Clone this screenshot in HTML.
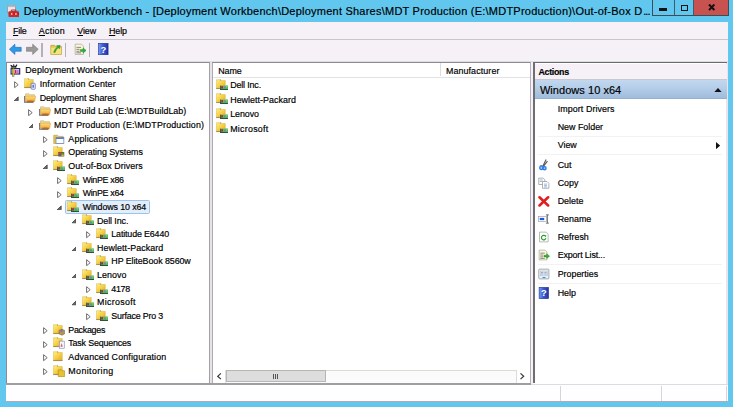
<!DOCTYPE html>
<html><head><meta charset="utf-8"><title>DeploymentWorkbench</title><style>
html,body{margin:0;padding:0}
body{width:733px;height:407px;overflow:hidden;background:#61c7ee;position:relative;font-family:"Liberation Sans", sans-serif;}
.t{position:absolute;white-space:nowrap;line-height:14px;height:14px;color:#000;-webkit-text-stroke:0.18px #000}
.ic{position:absolute;display:block}
.abs{position:absolute}
.sel{position:absolute;box-sizing:border-box;border:1px solid #9cc2ee;background:#e3eefb;border-radius:1.5px}
u{text-decoration:underline;text-decoration-thickness:0.8px;text-underline-offset:1px}
</style></head>
<body>

<svg width="0" height="0" style="position:absolute"><defs>
<linearGradient id="fg" x1="0" y1="0" x2="1" y2="1"><stop offset="0" stop-color="#fdee94"/><stop offset="0.45" stop-color="#f7d548"/><stop offset="1" stop-color="#e9a92c"/></linearGradient>
<linearGradient id="fo" x1="0" y1="0" x2="0" y2="1"><stop offset="0" stop-color="#fde07a"/><stop offset="1" stop-color="#f0a83c"/></linearGradient>
<linearGradient id="hb" x1="0" y1="0" x2="1" y2="0"><stop offset="0" stop-color="#7a9cf4"/><stop offset="0.45" stop-color="#3a5cd4"/><stop offset="1" stop-color="#2034a0"/></linearGradient>
</defs></svg>
<div class="abs" style="left:5.6px;top:22.4px;width:722px;height:378.6px;background:#f5f1f7"></div>
<!-- caption buttons -->
<div class="abs" style="left:652.4px;top:0;width:76.4px;height:15.7px;background:#61c7ee;border:1px solid #3c4c58;border-top:none;box-sizing:border-box"></div>
<div class="abs" style="left:694px;top:0;width:34.1px;height:15.1px;background:#c8524f"></div>
<div class="abs" style="left:673.6px;top:0;width:1px;height:15px;background:#3c5c70"></div>
<div class="abs" style="left:693.3px;top:0;width:1px;height:15px;background:#3c5c70"></div>
<div class="abs" style="left:659.4px;top:8.1px;width:7.5px;height:2.7px;background:#111"></div>
<div class="abs" style="left:680.6px;top:4.6px;width:7.6px;height:6.1px;border:1.5px solid #111;border-top-width:1.9px;box-sizing:border-box"></div>
<svg class="ic" style="left:708px;top:4.3px" width="7.4" height="6.6" viewBox="0 0 7.4 6.6"><path d="M1 0.5L6.4 6.1M6.4 0.5L1 6.1" stroke="#111" stroke-width="2"/></svg>
<!-- menu/toolbar separators -->
<div class="abs" style="left:5.6px;top:39.1px;width:722px;height:1px;background:#c9c5cd"></div>
<div class="abs" style="left:5.6px;top:61.4px;width:722px;height:1px;background:#e0dce4"></div>
<!-- tree pane -->
<div class="abs" style="left:5.6px;top:62.2px;width:204.2px;height:321.4px;background:#fff;border:1px solid #8e8a94;border-right-color:#a4a0a8;border-bottom:none;box-sizing:border-box"></div>
<div class="abs" style="left:209.8px;top:62.2px;width:2.2px;height:321.4px;background:#e6e2e8"></div>
<!-- list pane -->
<div class="abs" style="left:211.9px;top:62.2px;width:319.2px;height:321.4px;background:#fff;border:1px solid #8e8a94;border-left-color:#aeaab2;border-right-color:#b4b0bc;border-bottom:none;box-sizing:border-box"></div>
<div class="abs" style="left:212.9px;top:76.7px;width:317.2px;height:1px;background:#e2e2e6"></div>
<div class="abs" style="left:440.2px;top:63.2px;width:1px;height:13px;background:#dcdce0"></div>
<!-- hscroll -->
<div class="abs" style="left:212.9px;top:370px;width:317.2px;height:13px;background:#fbfbfb"></div>
<div class="abs" style="left:212.9px;top:369.6px;width:317.2px;height:1px;background:#dadada"></div>
<div class="abs" style="left:226.2px;top:370.4px;width:99.8px;height:12px;background:#dddddd;box-sizing:border-box;border:1px solid #b6b6b6"></div>
<!-- actions pane -->
<div class="abs" style="left:533.2px;top:62.2px;width:194.4px;height:321.4px;background:#fff"></div>
<div class="abs" style="left:726.4px;top:62.2px;width:1.2px;height:321.4px;background:#e8e6ea"></div>
<div class="abs" style="left:533.3px;top:62.2px;width:1.4px;height:320.6px;background:#6e6e6e"></div>
<div class="abs" style="left:533.2px;top:62.1px;width:194px;height:1.35px;background:#6a6a6a"></div>
<div class="abs" style="left:534.8px;top:63.5px;width:191.9px;height:15.6px;background:#f5f1f7"></div>
<div class="abs" style="left:534.8px;top:79px;width:191.9px;height:1px;background:#c8c8d0"></div>
<div class="abs" style="left:534.8px;top:80.2px;width:191.9px;height:18.2px;background:linear-gradient(#c3d8ef,#b4cde9 45%,#9fbcdc)"></div>
<div class="abs" style="left:534.8px;top:98.2px;width:191.9px;height:1px;background:#93b0d2"></div>
<svg class="ic" style="left:713.8px;top:87.8px" width="8" height="4.4" viewBox="0 0 8 4.4"><path d="M0 4.4L4 0L8 4.4z" fill="#111"/></svg>
<svg class="ic" style="left:716px;top:141.8px" width="4.2" height="7.2" viewBox="0 0 4.2 7.2"><path d="M0 0L4.2 3.6L0 7.2z" fill="#111"/></svg>
<!-- status bar -->
<div class="abs" style="left:5.6px;top:383.1px;width:525.4px;height:1.5px;background:#a09ca4"></div>
<div class="abs" style="left:531px;top:383.6px;width:196.6px;height:1px;background:#dcdce0"></div>
<div class="abs" style="left:5.6px;top:384.7px;width:722px;height:16.1px;background:#fefdff"></div>
<div class="abs" style="left:5.6px;top:400.6px;width:722px;height:0.8px;background:#b0acb4"></div>
<div class="abs" style="left:559.9px;top:385.5px;width:1px;height:15px;background:#d8d4dc"></div>
<div class="abs" style="left:661.2px;top:385.5px;width:1px;height:15px;background:#d8d4dc"></div>
<div class="abs" style="left:726.2px;top:385.5px;width:1px;height:15px;background:#d8d4dc"></div>
<div class="abs" style="left:538px;top:135.8px;width:184px;height:1px;background:#f2f2f6"></div>
<div class="abs" style="left:538px;top:154.4px;width:184px;height:1px;background:#f2f2f6"></div>
<div class="abs" style="left:538px;top:264.3px;width:184px;height:1px;background:#f2f2f6"></div>
<div class="abs" style="left:538px;top:282.9px;width:184px;height:1px;background:#f2f2f6"></div>
<div class="abs" style="left:516.4px;top:370.4px;width:1px;height:12.6px;background:#dcdcdc"></div><div class="abs" style="left:517.4px;top:370.4px;width:12.6px;height:12.6px;background:#fff"></div><div class="abs" style="left:225.4px;top:370.4px;width:1px;height:12.6px;background:#dcdcdc"></div><div class="abs" style="left:212.9px;top:370.4px;width:12.5px;height:12.6px;background:#fff"></div>
<svg class="ic" style="left:217.3px;top:373.1px" width="4.4" height="6.6" viewBox="0 0 4.4 6.6"><path d="M3.9 0.4L0.7 3.3L3.9 6.2" fill="none" stroke="#333" stroke-width="1.15"/></svg>
<svg class="ic" style="left:520.2px;top:373.1px" width="4.4" height="6.6" viewBox="0 0 4.4 6.6"><path d="M0.5 0.4L3.7 3.3L0.5 6.2" fill="none" stroke="#333" stroke-width="1.15"/></svg>
<div class="abs" style="left:273.0px;top:373.7px;width:1.1px;height:5px;background:#555"></div><div class="abs" style="left:275.1px;top:373.7px;width:1.1px;height:5px;background:#555"></div><div class="abs" style="left:277.2px;top:373.7px;width:1.1px;height:5px;background:#555"></div>
<svg class="ic" style="left:10.20px;top:64.10px" width="11" height="13" viewBox="0 0 11 13"><path d="M0.6 1.1l2.4 1.7M3.6 0.4l0.5 2.4M7 0.7L5.2 3.1" stroke="#111" stroke-width="1.1" fill="none"/><path d="M0.8 3h5.6" stroke="#111" stroke-width="1.2"/><rect x="1.1" y="4.6" width="8.6" height="5.4" fill="#fff" stroke="#1a2060" stroke-width="1.1"/><rect x="2.5" y="4.3" width="1.5" height="8.2" fill="#f0e020" stroke="#333" stroke-width="0.4"/><rect x="4.7" y="5.8" width="1.8" height="3.2" fill="#e02020"/><rect x="6.7" y="5.8" width="2.1" height="3.2" fill="#d870d8"/></svg>
<svg class="ic" style="left:24.24px;top:78.04px" width="12" height="12" viewBox="0 0 16 16"><path d="M0.5 0.9h5.4l0.8 1.1H12.4v10.4H0.5z" fill="url(#fg)" stroke="#d6ae3c" stroke-width="0.6"/><path d="M0.2 12.5h12.5v0.9H0.2z" fill="#7a6428"/><path d="M6.1 0.4v1.8" stroke="#8a6a20" stroke-width="0.7"/><rect x="9.5" y="7" width="5.5" height="8" rx="1" fill="#e8eefc" stroke="#4a62b8" stroke-width="0.9"/><rect x="11.4" y="9" width="1.6" height="4" fill="#3a52c8"/></svg>
<svg class="ic" style="left:14.14px;top:81.34px" width="5" height="7.4" viewBox="0 0 5 7.4"><path d="M0.6 0.7L4.2 3.7L0.6 6.7z" fill="#fff" stroke="#666" stroke-width="0.95"/></svg>
<svg class="ic" style="left:24.24px;top:91.69px" width="12" height="12" viewBox="0 0 16 16"><path d="M2 2.4h4.6l1 1.2H14v4H2z" fill="#ecd89a" stroke="#c8a860" stroke-width="0.7"/><path d="M0.9 5.6h14.6l-1.2 6.8H2z" fill="url(#fo)" stroke="#d09a38" stroke-width="0.6"/><path d="M3.5 12.2c2-1.4 7-1.4 10.5-0.2l-1 1.6H4.5z" fill="#e07a20"/><path d="M0.8 5.4v8.6" stroke="#283058" stroke-width="0.9"/><path d="M0.6 13.6h12" stroke="#383838" stroke-width="1.1"/></svg>
<svg class="ic" style="left:13.24px;top:95.69px" width="5.8" height="5.4" viewBox="0 0 5.8 5.4"><path d="M5.2 0.9V4.8H1.1z" fill="#6a6a6a" stroke="#3a3a3a" stroke-width="0.75"/></svg>
<svg class="ic" style="left:38.58px;top:105.33px" width="12" height="12" viewBox="0 0 16 16"><path d="M2 2.4h4.6l1 1.2H14v4H2z" fill="#ecd89a" stroke="#c8a860" stroke-width="0.7"/><path d="M0.9 5.6h14.6l-1.2 6.8H2z" fill="url(#fo)" stroke="#d09a38" stroke-width="0.6"/><path d="M3.5 12.2c2-1.4 7-1.4 10.5-0.2l-1 1.6H4.5z" fill="#e07a20"/><path d="M0.8 5.4v8.6" stroke="#283058" stroke-width="0.9"/><path d="M0.6 13.6h12" stroke="#383838" stroke-width="1.1"/></svg>
<svg class="ic" style="left:28.48px;top:108.64px" width="5" height="7.4" viewBox="0 0 5 7.4"><path d="M0.6 0.7L4.2 3.7L0.6 6.7z" fill="#fff" stroke="#666" stroke-width="0.95"/></svg>
<svg class="ic" style="left:38.58px;top:118.98px" width="12" height="12" viewBox="0 0 16 16"><path d="M2 2.4h4.6l1 1.2H14v4H2z" fill="#ecd89a" stroke="#c8a860" stroke-width="0.7"/><path d="M0.9 5.6h14.6l-1.2 6.8H2z" fill="url(#fo)" stroke="#d09a38" stroke-width="0.6"/><path d="M3.5 12.2c2-1.4 7-1.4 10.5-0.2l-1 1.6H4.5z" fill="#e07a20"/><path d="M0.8 5.4v8.6" stroke="#283058" stroke-width="0.9"/><path d="M0.6 13.6h12" stroke="#383838" stroke-width="1.1"/></svg>
<svg class="ic" style="left:27.58px;top:122.98px" width="5.8" height="5.4" viewBox="0 0 5.8 5.4"><path d="M5.2 0.9V4.8H1.1z" fill="#6a6a6a" stroke="#3a3a3a" stroke-width="0.75"/></svg>
<svg class="ic" style="left:52.92px;top:132.62px" width="12" height="12" viewBox="0 0 16 16"><path d="M1 3h5l1.2 1.5H13.5v9.5H1z" fill="#e8c84a" stroke="#b89830" stroke-width="0.8"/><rect x="4" y="6" width="10.5" height="8" fill="#fff" stroke="#5a78b8" stroke-width="0.9"/><rect x="4" y="6" width="10.5" height="2" fill="#5a78d8"/></svg>
<svg class="ic" style="left:42.82px;top:135.92px" width="5" height="7.4" viewBox="0 0 5 7.4"><path d="M0.6 0.7L4.2 3.7L0.6 6.7z" fill="#fff" stroke="#666" stroke-width="0.95"/></svg>
<svg class="ic" style="left:52.92px;top:146.27px" width="12" height="12" viewBox="0 0 16 16"><path d="M0.5 0.9h5.4l0.8 1.1H12.4v10.4H0.5z" fill="url(#fg)" stroke="#d6ae3c" stroke-width="0.6"/><path d="M0.2 12.5h12.5v0.9H0.2z" fill="#7a6428"/><path d="M6.1 0.4v1.8" stroke="#8a6a20" stroke-width="0.7"/><rect x="7" y="8" width="8" height="6" fill="#7a5a28"/><rect x="8" y="9" width="3" height="2" fill="#d04040"/><rect x="11.3" y="9" width="3" height="2" fill="#40a040"/><rect x="8" y="11.4" width="3" height="2" fill="#4060d0"/><rect x="11.3" y="11.4" width="3" height="2" fill="#e0c030"/></svg>
<svg class="ic" style="left:42.82px;top:149.57px" width="5" height="7.4" viewBox="0 0 5 7.4"><path d="M0.6 0.7L4.2 3.7L0.6 6.7z" fill="#fff" stroke="#666" stroke-width="0.95"/></svg>
<svg class="ic" style="left:52.92px;top:159.91px" width="12" height="12" viewBox="0 0 16 16"><path d="M0.5 0.9h5.4l0.8 1.1H12.4v10.4H0.5z" fill="url(#fg)" stroke="#d6ae3c" stroke-width="0.6"/><path d="M0.2 12.5h12.5v0.9H0.2z" fill="#7a6428"/><path d="M6.1 0.4v1.8" stroke="#8a6a20" stroke-width="0.7"/><rect x="6.4" y="9" width="9.4" height="5" fill="#3c9a44"/><rect x="9.4" y="9.6" width="5.8" height="3.2" fill="#66c86c"/><rect x="13" y="8" width="2.6" height="2" fill="#8adc8a"/><rect x="7" y="9.8" width="2.4" height="2.4" fill="#c4203c"/><rect x="11" y="10.2" width="2" height="2" fill="#6878c8"/><rect x="5.6" y="13.6" width="10.4" height="1.1" fill="#1a3420"/><path d="M6 8.8v5.6" stroke="#1a2a50" stroke-width="0.9"/></svg>
<svg class="ic" style="left:41.92px;top:163.91px" width="5.8" height="5.4" viewBox="0 0 5.8 5.4"><path d="M5.2 0.9V4.8H1.1z" fill="#6a6a6a" stroke="#3a3a3a" stroke-width="0.75"/></svg>
<svg class="ic" style="left:67.26px;top:173.56px" width="12" height="12" viewBox="0 0 16 16"><path d="M0.5 0.9h5.4l0.8 1.1H12.4v10.4H0.5z" fill="url(#fg)" stroke="#d6ae3c" stroke-width="0.6"/><path d="M0.2 12.5h12.5v0.9H0.2z" fill="#7a6428"/><path d="M6.1 0.4v1.8" stroke="#8a6a20" stroke-width="0.7"/><rect x="6.4" y="9" width="9.4" height="5" fill="#3c9a44"/><rect x="9.4" y="9.6" width="5.8" height="3.2" fill="#66c86c"/><rect x="13" y="8" width="2.6" height="2" fill="#8adc8a"/><rect x="7" y="9.8" width="2.4" height="2.4" fill="#c4203c"/><rect x="11" y="10.2" width="2" height="2" fill="#6878c8"/><rect x="5.6" y="13.6" width="10.4" height="1.1" fill="#1a3420"/><path d="M6 8.8v5.6" stroke="#1a2a50" stroke-width="0.9"/></svg>
<svg class="ic" style="left:57.16px;top:176.86px" width="5" height="7.4" viewBox="0 0 5 7.4"><path d="M0.6 0.7L4.2 3.7L0.6 6.7z" fill="#fff" stroke="#666" stroke-width="0.95"/></svg>
<svg class="ic" style="left:67.26px;top:187.20px" width="12" height="12" viewBox="0 0 16 16"><path d="M0.5 0.9h5.4l0.8 1.1H12.4v10.4H0.5z" fill="url(#fg)" stroke="#d6ae3c" stroke-width="0.6"/><path d="M0.2 12.5h12.5v0.9H0.2z" fill="#7a6428"/><path d="M6.1 0.4v1.8" stroke="#8a6a20" stroke-width="0.7"/><rect x="6.4" y="9" width="9.4" height="5" fill="#3c9a44"/><rect x="9.4" y="9.6" width="5.8" height="3.2" fill="#66c86c"/><rect x="13" y="8" width="2.6" height="2" fill="#8adc8a"/><rect x="7" y="9.8" width="2.4" height="2.4" fill="#c4203c"/><rect x="11" y="10.2" width="2" height="2" fill="#6878c8"/><rect x="5.6" y="13.6" width="10.4" height="1.1" fill="#1a3420"/><path d="M6 8.8v5.6" stroke="#1a2a50" stroke-width="0.9"/></svg>
<svg class="ic" style="left:57.16px;top:190.50px" width="5" height="7.4" viewBox="0 0 5 7.4"><path d="M0.6 0.7L4.2 3.7L0.6 6.7z" fill="#fff" stroke="#666" stroke-width="0.95"/></svg>
<div class="sel" style="left:64.9px;top:200.00px;width:85.2px;height:13.7px"></div>
<svg class="ic" style="left:67.26px;top:200.85px" width="12" height="12" viewBox="0 0 16 16"><path d="M0.5 0.9h5.4l0.8 1.1H12.4v10.4H0.5z" fill="url(#fg)" stroke="#d6ae3c" stroke-width="0.6"/><path d="M0.2 12.5h12.5v0.9H0.2z" fill="#7a6428"/><path d="M6.1 0.4v1.8" stroke="#8a6a20" stroke-width="0.7"/><rect x="6.4" y="9" width="9.4" height="5" fill="#3c9a44"/><rect x="9.4" y="9.6" width="5.8" height="3.2" fill="#66c86c"/><rect x="13" y="8" width="2.6" height="2" fill="#8adc8a"/><rect x="7" y="9.8" width="2.4" height="2.4" fill="#c4203c"/><rect x="11" y="10.2" width="2" height="2" fill="#6878c8"/><rect x="5.6" y="13.6" width="10.4" height="1.1" fill="#1a3420"/><path d="M6 8.8v5.6" stroke="#1a2a50" stroke-width="0.9"/></svg>
<svg class="ic" style="left:56.26px;top:204.85px" width="5.8" height="5.4" viewBox="0 0 5.8 5.4"><path d="M5.2 0.9V4.8H1.1z" fill="#6a6a6a" stroke="#3a3a3a" stroke-width="0.75"/></svg>
<svg class="ic" style="left:81.60px;top:214.49px" width="12" height="12" viewBox="0 0 16 16"><path d="M0.5 0.9h5.4l0.8 1.1H12.4v10.4H0.5z" fill="url(#fg)" stroke="#d6ae3c" stroke-width="0.6"/><path d="M0.2 12.5h12.5v0.9H0.2z" fill="#7a6428"/><path d="M6.1 0.4v1.8" stroke="#8a6a20" stroke-width="0.7"/><rect x="6.4" y="9" width="9.4" height="5" fill="#3c9a44"/><rect x="9.4" y="9.6" width="5.8" height="3.2" fill="#66c86c"/><rect x="13" y="8" width="2.6" height="2" fill="#8adc8a"/><rect x="7" y="9.8" width="2.4" height="2.4" fill="#c4203c"/><rect x="11" y="10.2" width="2" height="2" fill="#6878c8"/><rect x="5.6" y="13.6" width="10.4" height="1.1" fill="#1a3420"/><path d="M6 8.8v5.6" stroke="#1a2a50" stroke-width="0.9"/></svg>
<svg class="ic" style="left:70.60px;top:218.49px" width="5.8" height="5.4" viewBox="0 0 5.8 5.4"><path d="M5.2 0.9V4.8H1.1z" fill="#6a6a6a" stroke="#3a3a3a" stroke-width="0.75"/></svg>
<svg class="ic" style="left:95.94px;top:228.14px" width="12" height="12" viewBox="0 0 16 16"><path d="M0.5 0.9h5.4l0.8 1.1H12.4v10.4H0.5z" fill="url(#fg)" stroke="#d6ae3c" stroke-width="0.6"/><path d="M0.2 12.5h12.5v0.9H0.2z" fill="#7a6428"/><path d="M6.1 0.4v1.8" stroke="#8a6a20" stroke-width="0.7"/><rect x="6.4" y="9" width="9.4" height="5" fill="#3c9a44"/><rect x="9.4" y="9.6" width="5.8" height="3.2" fill="#66c86c"/><rect x="13" y="8" width="2.6" height="2" fill="#8adc8a"/><rect x="7" y="9.8" width="2.4" height="2.4" fill="#c4203c"/><rect x="11" y="10.2" width="2" height="2" fill="#6878c8"/><rect x="5.6" y="13.6" width="10.4" height="1.1" fill="#1a3420"/><path d="M6 8.8v5.6" stroke="#1a2a50" stroke-width="0.9"/></svg>
<svg class="ic" style="left:85.84px;top:231.44px" width="5" height="7.4" viewBox="0 0 5 7.4"><path d="M0.6 0.7L4.2 3.7L0.6 6.7z" fill="#fff" stroke="#666" stroke-width="0.95"/></svg>
<svg class="ic" style="left:81.60px;top:241.78px" width="12" height="12" viewBox="0 0 16 16"><path d="M0.5 0.9h5.4l0.8 1.1H12.4v10.4H0.5z" fill="url(#fg)" stroke="#d6ae3c" stroke-width="0.6"/><path d="M0.2 12.5h12.5v0.9H0.2z" fill="#7a6428"/><path d="M6.1 0.4v1.8" stroke="#8a6a20" stroke-width="0.7"/><rect x="6.4" y="9" width="9.4" height="5" fill="#3c9a44"/><rect x="9.4" y="9.6" width="5.8" height="3.2" fill="#66c86c"/><rect x="13" y="8" width="2.6" height="2" fill="#8adc8a"/><rect x="7" y="9.8" width="2.4" height="2.4" fill="#c4203c"/><rect x="11" y="10.2" width="2" height="2" fill="#6878c8"/><rect x="5.6" y="13.6" width="10.4" height="1.1" fill="#1a3420"/><path d="M6 8.8v5.6" stroke="#1a2a50" stroke-width="0.9"/></svg>
<svg class="ic" style="left:70.60px;top:245.78px" width="5.8" height="5.4" viewBox="0 0 5.8 5.4"><path d="M5.2 0.9V4.8H1.1z" fill="#6a6a6a" stroke="#3a3a3a" stroke-width="0.75"/></svg>
<svg class="ic" style="left:95.94px;top:255.43px" width="12" height="12" viewBox="0 0 16 16"><path d="M0.5 0.9h5.4l0.8 1.1H12.4v10.4H0.5z" fill="url(#fg)" stroke="#d6ae3c" stroke-width="0.6"/><path d="M0.2 12.5h12.5v0.9H0.2z" fill="#7a6428"/><path d="M6.1 0.4v1.8" stroke="#8a6a20" stroke-width="0.7"/><rect x="6.4" y="9" width="9.4" height="5" fill="#3c9a44"/><rect x="9.4" y="9.6" width="5.8" height="3.2" fill="#66c86c"/><rect x="13" y="8" width="2.6" height="2" fill="#8adc8a"/><rect x="7" y="9.8" width="2.4" height="2.4" fill="#c4203c"/><rect x="11" y="10.2" width="2" height="2" fill="#6878c8"/><rect x="5.6" y="13.6" width="10.4" height="1.1" fill="#1a3420"/><path d="M6 8.8v5.6" stroke="#1a2a50" stroke-width="0.9"/></svg>
<svg class="ic" style="left:85.84px;top:258.73px" width="5" height="7.4" viewBox="0 0 5 7.4"><path d="M0.6 0.7L4.2 3.7L0.6 6.7z" fill="#fff" stroke="#666" stroke-width="0.95"/></svg>
<svg class="ic" style="left:81.60px;top:269.07px" width="12" height="12" viewBox="0 0 16 16"><path d="M0.5 0.9h5.4l0.8 1.1H12.4v10.4H0.5z" fill="url(#fg)" stroke="#d6ae3c" stroke-width="0.6"/><path d="M0.2 12.5h12.5v0.9H0.2z" fill="#7a6428"/><path d="M6.1 0.4v1.8" stroke="#8a6a20" stroke-width="0.7"/><rect x="6.4" y="9" width="9.4" height="5" fill="#3c9a44"/><rect x="9.4" y="9.6" width="5.8" height="3.2" fill="#66c86c"/><rect x="13" y="8" width="2.6" height="2" fill="#8adc8a"/><rect x="7" y="9.8" width="2.4" height="2.4" fill="#c4203c"/><rect x="11" y="10.2" width="2" height="2" fill="#6878c8"/><rect x="5.6" y="13.6" width="10.4" height="1.1" fill="#1a3420"/><path d="M6 8.8v5.6" stroke="#1a2a50" stroke-width="0.9"/></svg>
<svg class="ic" style="left:70.60px;top:273.07px" width="5.8" height="5.4" viewBox="0 0 5.8 5.4"><path d="M5.2 0.9V4.8H1.1z" fill="#6a6a6a" stroke="#3a3a3a" stroke-width="0.75"/></svg>
<svg class="ic" style="left:95.94px;top:282.72px" width="12" height="12" viewBox="0 0 16 16"><path d="M0.5 0.9h5.4l0.8 1.1H12.4v10.4H0.5z" fill="url(#fg)" stroke="#d6ae3c" stroke-width="0.6"/><path d="M0.2 12.5h12.5v0.9H0.2z" fill="#7a6428"/><path d="M6.1 0.4v1.8" stroke="#8a6a20" stroke-width="0.7"/><rect x="6.4" y="9" width="9.4" height="5" fill="#3c9a44"/><rect x="9.4" y="9.6" width="5.8" height="3.2" fill="#66c86c"/><rect x="13" y="8" width="2.6" height="2" fill="#8adc8a"/><rect x="7" y="9.8" width="2.4" height="2.4" fill="#c4203c"/><rect x="11" y="10.2" width="2" height="2" fill="#6878c8"/><rect x="5.6" y="13.6" width="10.4" height="1.1" fill="#1a3420"/><path d="M6 8.8v5.6" stroke="#1a2a50" stroke-width="0.9"/></svg>
<svg class="ic" style="left:85.84px;top:286.02px" width="5" height="7.4" viewBox="0 0 5 7.4"><path d="M0.6 0.7L4.2 3.7L0.6 6.7z" fill="#fff" stroke="#666" stroke-width="0.95"/></svg>
<svg class="ic" style="left:81.60px;top:296.37px" width="12" height="12" viewBox="0 0 16 16"><path d="M0.5 0.9h5.4l0.8 1.1H12.4v10.4H0.5z" fill="url(#fg)" stroke="#d6ae3c" stroke-width="0.6"/><path d="M0.2 12.5h12.5v0.9H0.2z" fill="#7a6428"/><path d="M6.1 0.4v1.8" stroke="#8a6a20" stroke-width="0.7"/><rect x="6.4" y="9" width="9.4" height="5" fill="#3c9a44"/><rect x="9.4" y="9.6" width="5.8" height="3.2" fill="#66c86c"/><rect x="13" y="8" width="2.6" height="2" fill="#8adc8a"/><rect x="7" y="9.8" width="2.4" height="2.4" fill="#c4203c"/><rect x="11" y="10.2" width="2" height="2" fill="#6878c8"/><rect x="5.6" y="13.6" width="10.4" height="1.1" fill="#1a3420"/><path d="M6 8.8v5.6" stroke="#1a2a50" stroke-width="0.9"/></svg>
<svg class="ic" style="left:70.60px;top:300.37px" width="5.8" height="5.4" viewBox="0 0 5.8 5.4"><path d="M5.2 0.9V4.8H1.1z" fill="#6a6a6a" stroke="#3a3a3a" stroke-width="0.75"/></svg>
<svg class="ic" style="left:95.94px;top:310.01px" width="12" height="12" viewBox="0 0 16 16"><path d="M0.5 0.9h5.4l0.8 1.1H12.4v10.4H0.5z" fill="url(#fg)" stroke="#d6ae3c" stroke-width="0.6"/><path d="M0.2 12.5h12.5v0.9H0.2z" fill="#7a6428"/><path d="M6.1 0.4v1.8" stroke="#8a6a20" stroke-width="0.7"/><rect x="6.4" y="9" width="9.4" height="5" fill="#3c9a44"/><rect x="9.4" y="9.6" width="5.8" height="3.2" fill="#66c86c"/><rect x="13" y="8" width="2.6" height="2" fill="#8adc8a"/><rect x="7" y="9.8" width="2.4" height="2.4" fill="#c4203c"/><rect x="11" y="10.2" width="2" height="2" fill="#6878c8"/><rect x="5.6" y="13.6" width="10.4" height="1.1" fill="#1a3420"/><path d="M6 8.8v5.6" stroke="#1a2a50" stroke-width="0.9"/></svg>
<svg class="ic" style="left:85.84px;top:313.31px" width="5" height="7.4" viewBox="0 0 5 7.4"><path d="M0.6 0.7L4.2 3.7L0.6 6.7z" fill="#fff" stroke="#666" stroke-width="0.95"/></svg>
<svg class="ic" style="left:52.92px;top:323.66px" width="12" height="12" viewBox="0 0 16 16"><path d="M0.5 0.9h5.4l0.8 1.1H12.4v10.4H0.5z" fill="url(#fg)" stroke="#d6ae3c" stroke-width="0.6"/><path d="M0.2 12.5h12.5v0.9H0.2z" fill="#7a6428"/><path d="M6.1 0.4v1.8" stroke="#8a6a20" stroke-width="0.7"/><path d="M8 8.5l4-1.5 3.5 1.5v4.5L12 15l-4-2z" fill="#b89058" stroke="#7a5a28" stroke-width="0.7"/><circle cx="11.5" cy="9" r="1.6" fill="#6a78c8"/></svg>
<svg class="ic" style="left:42.82px;top:326.95px" width="5" height="7.4" viewBox="0 0 5 7.4"><path d="M0.6 0.7L4.2 3.7L0.6 6.7z" fill="#fff" stroke="#666" stroke-width="0.95"/></svg>
<svg class="ic" style="left:52.92px;top:337.30px" width="12" height="12" viewBox="0 0 16 16"><path d="M0.5 0.9h5.4l0.8 1.1H12.4v10.4H0.5z" fill="url(#fg)" stroke="#d6ae3c" stroke-width="0.6"/><path d="M0.2 12.5h12.5v0.9H0.2z" fill="#7a6428"/><path d="M6.1 0.4v1.8" stroke="#8a6a20" stroke-width="0.7"/><rect x="8.5" y="5.5" width="6.5" height="9.5" fill="#f4f6ff" stroke="#7a88b8" stroke-width="0.8"/><path d="M10 13l1.5-5 1.5 5z" fill="#e06060"/></svg>
<svg class="ic" style="left:42.82px;top:340.60px" width="5" height="7.4" viewBox="0 0 5 7.4"><path d="M0.6 0.7L4.2 3.7L0.6 6.7z" fill="#fff" stroke="#666" stroke-width="0.95"/></svg>
<svg class="ic" style="left:52.92px;top:350.95px" width="12" height="12" viewBox="0 0 16 16"><path d="M0.5 0.9h5.4l0.8 1.1H12.4v10.4H0.5z" fill="url(#fg)" stroke="#d6ae3c" stroke-width="0.6"/><path d="M0.2 12.5h12.5v0.9H0.2z" fill="#7a6428"/><path d="M6.1 0.4v1.8" stroke="#8a6a20" stroke-width="0.7"/></svg>
<svg class="ic" style="left:42.82px;top:354.25px" width="5" height="7.4" viewBox="0 0 5 7.4"><path d="M0.6 0.7L4.2 3.7L0.6 6.7z" fill="#fff" stroke="#666" stroke-width="0.95"/></svg>
<svg class="ic" style="left:52.92px;top:364.59px" width="12" height="12" viewBox="0 0 16 16"><path d="M0.5 0.9h5.4l0.8 1.1H12.4v10.4H0.5z" fill="url(#fg)" stroke="#d6ae3c" stroke-width="0.6"/><path d="M0.2 12.5h12.5v0.9H0.2z" fill="#7a6428"/><path d="M6.1 0.4v1.8" stroke="#8a6a20" stroke-width="0.7"/><path d="M7 6.5h4l1 1.2H15.5v7.8H7z" fill="#e8c030" stroke="#a88820" stroke-width="0.8"/></svg>
<svg class="ic" style="left:42.82px;top:367.89px" width="5" height="7.4" viewBox="0 0 5 7.4"><path d="M0.6 0.7L4.2 3.7L0.6 6.7z" fill="#fff" stroke="#666" stroke-width="0.95"/></svg>
<svg class="ic" style="left:216.20px;top:78.80px" width="12" height="12" viewBox="0 0 16 16"><path d="M0.5 0.9h5.4l0.8 1.1H12.4v10.4H0.5z" fill="url(#fg)" stroke="#d6ae3c" stroke-width="0.6"/><path d="M0.2 12.5h12.5v0.9H0.2z" fill="#7a6428"/><path d="M6.1 0.4v1.8" stroke="#8a6a20" stroke-width="0.7"/><rect x="6.4" y="9" width="9.4" height="5" fill="#3c9a44"/><rect x="9.4" y="9.6" width="5.8" height="3.2" fill="#66c86c"/><rect x="13" y="8" width="2.6" height="2" fill="#8adc8a"/><rect x="7" y="9.8" width="2.4" height="2.4" fill="#c4203c"/><rect x="11" y="10.2" width="2" height="2" fill="#6878c8"/><rect x="5.6" y="13.6" width="10.4" height="1.1" fill="#1a3420"/><path d="M6 8.8v5.6" stroke="#1a2a50" stroke-width="0.9"/></svg>
<svg class="ic" style="left:216.20px;top:93.25px" width="12" height="12" viewBox="0 0 16 16"><path d="M0.5 0.9h5.4l0.8 1.1H12.4v10.4H0.5z" fill="url(#fg)" stroke="#d6ae3c" stroke-width="0.6"/><path d="M0.2 12.5h12.5v0.9H0.2z" fill="#7a6428"/><path d="M6.1 0.4v1.8" stroke="#8a6a20" stroke-width="0.7"/><rect x="6.4" y="9" width="9.4" height="5" fill="#3c9a44"/><rect x="9.4" y="9.6" width="5.8" height="3.2" fill="#66c86c"/><rect x="13" y="8" width="2.6" height="2" fill="#8adc8a"/><rect x="7" y="9.8" width="2.4" height="2.4" fill="#c4203c"/><rect x="11" y="10.2" width="2" height="2" fill="#6878c8"/><rect x="5.6" y="13.6" width="10.4" height="1.1" fill="#1a3420"/><path d="M6 8.8v5.6" stroke="#1a2a50" stroke-width="0.9"/></svg>
<svg class="ic" style="left:216.20px;top:107.70px" width="12" height="12" viewBox="0 0 16 16"><path d="M0.5 0.9h5.4l0.8 1.1H12.4v10.4H0.5z" fill="url(#fg)" stroke="#d6ae3c" stroke-width="0.6"/><path d="M0.2 12.5h12.5v0.9H0.2z" fill="#7a6428"/><path d="M6.1 0.4v1.8" stroke="#8a6a20" stroke-width="0.7"/><rect x="6.4" y="9" width="9.4" height="5" fill="#3c9a44"/><rect x="9.4" y="9.6" width="5.8" height="3.2" fill="#66c86c"/><rect x="13" y="8" width="2.6" height="2" fill="#8adc8a"/><rect x="7" y="9.8" width="2.4" height="2.4" fill="#c4203c"/><rect x="11" y="10.2" width="2" height="2" fill="#6878c8"/><rect x="5.6" y="13.6" width="10.4" height="1.1" fill="#1a3420"/><path d="M6 8.8v5.6" stroke="#1a2a50" stroke-width="0.9"/></svg>
<svg class="ic" style="left:216.20px;top:122.15px" width="12" height="12" viewBox="0 0 16 16"><path d="M0.5 0.9h5.4l0.8 1.1H12.4v10.4H0.5z" fill="url(#fg)" stroke="#d6ae3c" stroke-width="0.6"/><path d="M0.2 12.5h12.5v0.9H0.2z" fill="#7a6428"/><path d="M6.1 0.4v1.8" stroke="#8a6a20" stroke-width="0.7"/><rect x="6.4" y="9" width="9.4" height="5" fill="#3c9a44"/><rect x="9.4" y="9.6" width="5.8" height="3.2" fill="#66c86c"/><rect x="13" y="8" width="2.6" height="2" fill="#8adc8a"/><rect x="7" y="9.8" width="2.4" height="2.4" fill="#c4203c"/><rect x="11" y="10.2" width="2" height="2" fill="#6878c8"/><rect x="5.6" y="13.6" width="10.4" height="1.1" fill="#1a3420"/><path d="M6 8.8v5.6" stroke="#1a2a50" stroke-width="0.9"/></svg>
<svg class="ic" style="left:538.40px;top:158.50px" width="12" height="12" viewBox="0 0 16 16"><path d="M10.8 0.6L6.4 9.6M12.6 2.8L7.2 10" stroke="#5a5a5a" stroke-width="1.5" fill="none"/><ellipse cx="4.4" cy="11.6" rx="2.1" ry="2.6" fill="#9cc8f8" stroke="#2a7ae0" stroke-width="1.7"/><ellipse cx="8.8" cy="12.4" rx="2" ry="2.2" fill="#9cc8f8" stroke="#2a7ae0" stroke-width="1.7"/></svg>
<svg class="ic" style="left:538.40px;top:176.70px" width="12" height="12" viewBox="0 0 16 16"><path d="M1 1.5h6l2 2V10H1z" fill="#fff" stroke="#8a8a8a" stroke-width="0.9"/><path d="M6 6h6l2.5 2.5V15H6z" fill="#fff" stroke="#8a8a8a" stroke-width="0.9"/><path d="M2.5 4h4M2.5 6h3M8 9.5h4M8 11.5h4M8 13.3h4" stroke="#6a9ad8" stroke-width="0.9"/></svg>
<svg class="ic" style="left:538.40px;top:194.50px" width="12" height="12" viewBox="0 0 16 16"><path d="M2 3L13.5 14M13.5 3L2 14" stroke="#e02020" stroke-width="3.4" stroke-linecap="round"/></svg>
<svg class="ic" style="left:538.40px;top:212.80px" width="12" height="12" viewBox="0 0 16 16"><rect x="0.8" y="4.5" width="10.5" height="7" fill="#fff" stroke="#9aa0a8" stroke-width="0.9"/><rect x="2.3" y="6.5" width="6" height="3" fill="#1a5ae0"/><path d="M10.5 2.5h4M12.5 2.5v11M10.5 13.5h4" stroke="#444" stroke-width="1" fill="none"/></svg>
<svg class="ic" style="left:538.40px;top:231.00px" width="12" height="12" viewBox="0 0 16 16"><path d="M2 1.5h9l2.5 2.5V14.5H2z" fill="#fff" stroke="#9a9a9a" stroke-width="0.9"/><path d="M10.5 9.5a3 3 0 1 1-1-3" fill="none" stroke="#2aa02a" stroke-width="1.6"/><path d="M8.5 5l3 1.2-2 2z" fill="#2aa02a"/></svg>
<svg class="ic" style="left:538.40px;top:249.20px" width="12" height="12" viewBox="0 0 16 16"><path d="M1.5 1.5h8l2.5 2.5V14.5H1.5z" fill="#fbf7de" stroke="#a4a48c" stroke-width="0.9"/><path d="M3 5.5h6M3 8h4M3 10.5h4M3 12.5h6" stroke="#555" stroke-width="0.9"/><path d="M8 8.3h3.5V6.2L15.5 9.5l-4 3.3v-2.1H8z" fill="#30b030" stroke="#208020" stroke-width="0.5"/></svg>
<svg class="ic" style="left:538.40px;top:268.00px" width="12" height="12" viewBox="0 0 16 16"><rect x="1" y="1.5" width="13.5" height="13" rx="1" fill="#eef2f6" stroke="#8a9098" stroke-width="1"/><rect x="3" y="4" width="9.5" height="6.5" fill="#dfe7f0" stroke="#a8b0c0" stroke-width="0.6"/><path d="M4 6h3M8.5 6h3M4 8h3M8.5 8h3" stroke="#7a8ab0" stroke-width="0.8"/><rect x="6" y="12" width="4" height="1.4" fill="#20a0d8"/></svg>
<svg class="ic" style="left:538.40px;top:287.10px" width="12" height="12" viewBox="0 0 16 16"><rect x="1.5" y="0.5" width="12.5" height="15" fill="url(#hb)" stroke="#1c2c88" stroke-width="0.8"/><text x="7.8" y="12.6" font-family="Liberation Sans" font-weight="bold" font-size="12.5" fill="#fff" text-anchor="middle">?</text></svg>
<svg class="ic" style="left:9.00px;top:43.30px" width="12.6" height="12.6" viewBox="0 0 16 16"><path d="M0.5 8L7.5 1.5V5.5H15.5V10.5H7.5V14.5z" fill="#2f9ae8" stroke="#1a70c0" stroke-width="0.8"/></svg>
<svg class="ic" style="left:26.20px;top:43.30px" width="12.6" height="12.6" viewBox="0 0 16 16"><path d="M15.5 8L8.5 1.5V5.5H0.5V10.5H8.5V14.5z" fill="#9a9a9a" stroke="#7a7a7a" stroke-width="0.8"/></svg>
<svg class="ic" style="left:50.20px;top:43.30px" width="12.6" height="12.6" viewBox="0 0 16 16"><path d="M1 3h5l1.2 1.5H14.5v10H1z" fill="#e8c84a" stroke="#b89830" stroke-width="0.8"/><path d="M1.6 6h12.4v8H1.6z" fill="#f6e27a"/><path d="M4.5 12c1-3.5 2.5-5.5 5-7l-1.2-1.7 4.7-0.3-1 4.6-1.2-1.5c-2 1.3-3.2 3-4.3 6z" fill="#30a830" stroke="#1a7a1a" stroke-width="0.4"/></svg>
<svg class="ic" style="left:73.50px;top:43.30px" width="12.6" height="12.6" viewBox="0 0 16 16"><path d="M1.5 1.5h8l2.5 2.5V14.5H1.5z" fill="#fbf7de" stroke="#a4a48c" stroke-width="0.9"/><path d="M3 5.5h6M3 8h4M3 10.5h4M3 12.5h6" stroke="#555" stroke-width="0.9"/><path d="M8 8.3h3.5V6.2L15.5 9.5l-4 3.3v-2.1H8z" fill="#30b030" stroke="#208020" stroke-width="0.5"/></svg>
<svg class="ic" style="left:97.6px;top:43.3px" width="11" height="12.2" viewBox="1 0 14 16"><rect x="1.5" y="0.5" width="12.5" height="15" fill="url(#hb)" stroke="#1c2c88" stroke-width="0.8"/><text x="7.8" y="12.6" font-family="Liberation Sans" font-weight="bold" font-size="12.5" fill="#fff" text-anchor="middle">?</text></svg>
<div style="position:absolute;left:41.4px;top:42.5px;width:1.2px;height:14.5px;background:#b4b0b8"></div>
<div style="position:absolute;left:64.9px;top:42.5px;width:1.2px;height:14.5px;background:#b4b0b8"></div>
<div style="position:absolute;left:88.8px;top:42.5px;width:1.2px;height:14.5px;background:#b4b0b8"></div>
<svg class="ic" style="left:7px;top:4.6px" width="12.4" height="12.4" viewBox="0 0 16 16"><rect x="0.5" y="0.5" width="10.5" height="9" fill="#e8e8ec" stroke="#8a8a90" stroke-width="0.9"/><rect x="0.5" y="0.5" width="10.5" height="2.2" fill="#b8b8c0"/><path d="M5.5 6.5h6v2H5.5z" fill="none" stroke="#a02020" stroke-width="1.2"/><rect x="2" y="8" width="13.5" height="7.5" rx="0.8" fill="#d82424"/><rect x="2" y="11" width="13.5" height="1" fill="#a01818"/><rect x="5" y="10.5" width="2" height="2.2" fill="#f0d0d0"/><rect x="10.5" y="10.5" width="2" height="2.2" fill="#f0d0d0"/></svg>
<span class="t" style="left:23.80px;top:4.33px;font-size:11.0px;letter-spacing:0.231px;">DeploymentWorkbench - [Deployment Workbench\Deployment Shares\MDT Production (E:\MDTProduction)\Out-of-Box D</span>
<span class="t" style="left:643.20px;top:4.33px;font-size:11.0px;letter-spacing:-0.924px;">...</span>
<span class="t" style="left:13.00px;top:24.10px;font-size:8.9px;letter-spacing:-0.228px;"><u>F</u>ile</span>
<span class="t" style="left:38.80px;top:24.10px;font-size:8.9px;letter-spacing:0.255px;"><u>A</u>ction</span>
<span class="t" style="left:77.30px;top:24.10px;font-size:8.9px;letter-spacing:-0.098px;"><u>V</u>iew</span>
<span class="t" style="left:108.90px;top:24.10px;font-size:8.9px;letter-spacing:-0.041px;"><u>H</u>elp</span>
<span class="t" style="left:25.30px;top:63.40px;font-size:8.9px;letter-spacing:0.137px;">Deployment Workbench</span>
<span class="t" style="left:39.64px;top:77.05px;font-size:8.9px;letter-spacing:0.147px;">Information Center</span>
<span class="t" style="left:39.64px;top:90.69px;font-size:8.9px;letter-spacing:-0.070px;">Deployment Shares</span>
<span class="t" style="left:53.98px;top:104.34px;font-size:8.9px;letter-spacing:0.026px;">MDT Build Lab (E:\MDTBuildLab)</span>
<span class="t" style="left:53.98px;top:117.98px;font-size:8.9px;letter-spacing:0.160px;">MDT Production (E:\MDTProduction)</span>
<span class="t" style="left:68.32px;top:131.63px;font-size:8.9px;letter-spacing:0.143px;">Applications</span>
<span class="t" style="left:68.32px;top:145.27px;font-size:8.9px;letter-spacing:-0.058px;">Operating Systems</span>
<span class="t" style="left:68.32px;top:158.92px;font-size:8.9px;letter-spacing:0.055px;">Out-of-Box Drivers</span>
<span class="t" style="left:82.66px;top:172.56px;font-size:8.9px;letter-spacing:-0.318px;">WinPE x86</span>
<span class="t" style="left:82.66px;top:186.21px;font-size:8.9px;letter-spacing:-0.318px;">WinPE x64</span>
<span class="t" style="left:82.66px;top:199.85px;font-size:8.9px;letter-spacing:-0.113px;">Windows 10 x64</span>
<span class="t" style="left:97.00px;top:213.50px;font-size:8.9px;letter-spacing:-0.085px;">Dell Inc.</span>
<span class="t" style="left:111.34px;top:227.14px;font-size:8.9px;letter-spacing:-0.147px;">Latitude E6440</span>
<span class="t" style="left:97.00px;top:240.79px;font-size:8.9px;letter-spacing:0.079px;">Hewlett-Packard</span>
<span class="t" style="left:111.34px;top:254.43px;font-size:8.9px;letter-spacing:-0.077px;">HP EliteBook 8560w</span>
<span class="t" style="left:97.00px;top:268.08px;font-size:8.9px;letter-spacing:0.046px;">Lenovo</span>
<span class="t" style="left:111.34px;top:281.72px;font-size:8.9px;letter-spacing:-0.322px;">4178</span>
<span class="t" style="left:97.00px;top:295.37px;font-size:8.9px;letter-spacing:0.300px;">Microsoft</span>
<span class="t" style="left:111.34px;top:309.01px;font-size:8.9px;letter-spacing:-0.193px;">Surface Pro 3</span>
<span class="t" style="left:68.32px;top:322.66px;font-size:8.9px;letter-spacing:-0.276px;">Packages</span>
<span class="t" style="left:68.32px;top:336.30px;font-size:8.9px;letter-spacing:-0.175px;">Task Sequences</span>
<span class="t" style="left:68.32px;top:349.95px;font-size:8.9px;letter-spacing:0.152px;">Advanced Configuration</span>
<span class="t" style="left:68.32px;top:363.59px;font-size:8.9px;letter-spacing:0.384px;">Monitoring</span>
<span class="t" style="left:218.20px;top:64.40px;font-size:8.9px;letter-spacing:-0.047px;">Name</span>
<span class="t" style="left:445.90px;top:64.40px;font-size:8.9px;letter-spacing:0.109px;">Manufacturer</span>
<span class="t" style="left:230.20px;top:78.40px;font-size:8.9px;letter-spacing:-0.140px;">Dell Inc.</span>
<span class="t" style="left:230.20px;top:92.85px;font-size:8.9px;letter-spacing:0.039px;">Hewlett-Packard</span>
<span class="t" style="left:230.20px;top:107.30px;font-size:8.9px;letter-spacing:-0.054px;">Lenovo</span>
<span class="t" style="left:230.20px;top:121.75px;font-size:8.9px;letter-spacing:0.256px;">Microsoft</span>
<span class="t" style="left:538.50px;top:64.90px;font-size:8.9px;letter-spacing:-0.321px;font-weight:bold;">Actions</span>
<span class="t" style="left:539.90px;top:83.43px;font-size:11.0px;letter-spacing:0.049px;">Windows 10 x64</span>
<span class="t" style="left:557.70px;top:101.50px;font-size:8.9px;letter-spacing:0.083px;">Import Drivers</span>
<span class="t" style="left:557.70px;top:119.70px;font-size:8.9px;letter-spacing:0.001px;">New Folder</span>
<span class="t" style="left:557.70px;top:138.40px;font-size:8.9px;">View</span>
<span class="t" style="left:557.70px;top:157.60px;font-size:8.9px;">Cut</span>
<span class="t" style="left:557.70px;top:175.80px;font-size:8.9px;">Copy</span>
<span class="t" style="left:557.70px;top:193.60px;font-size:8.9px;">Delete</span>
<span class="t" style="left:557.70px;top:211.90px;font-size:8.9px;">Rename</span>
<span class="t" style="left:557.70px;top:230.10px;font-size:8.9px;">Refresh</span>
<span class="t" style="left:557.70px;top:248.30px;font-size:8.9px;letter-spacing:-0.145px;">Export List...</span>
<span class="t" style="left:557.70px;top:267.10px;font-size:8.9px;">Properties</span>
<span class="t" style="left:557.70px;top:286.20px;font-size:8.9px;">Help</span>
</body></html>
